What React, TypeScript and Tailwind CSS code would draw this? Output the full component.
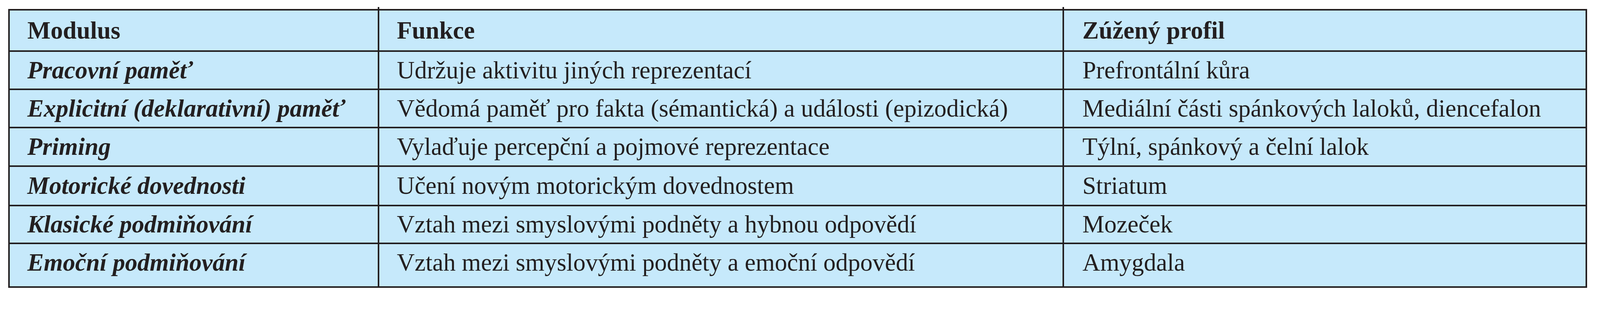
import React from "react"

type Row = {
  modul: string
  funkce: string
  profil: string
  h: string
}

const rows: Row[] = [
  { modul: "Pracovní paměť", funkce: "Udržuje aktivitu jiných reprezentací", profil: "Prefrontální kůra", h: "h-[98px]" },
  {
    modul: "Explicitní (deklarativní) paměť",
    funkce: "Vědomá paměť pro fakta (sémantická) a události (epizodická)",
    profil: "Mediální části spánkových laloků, diencefalon",
    h: "h-[98px]",
  },
  { modul: "Priming", funkce: "Vylaďuje percepční a pojmové reprezentace", profil: "Týlní, spánkový a čelní lalok", h: "h-[99px]" },
  { modul: "Motorické dovednosti", funkce: "Učení novým motorickým dovednostem", profil: "Striatum", h: "h-[101px]" },
  { modul: "Klasické podmiňování", funkce: "Vztah mezi smyslovými podněty a hybnou odpovědí", profil: "Mozeček", h: "h-[97px]" },
]

const last: Row = {
  modul: "Emoční podmiňování",
  funkce: "Vztah mezi smyslovými podněty a emoční odpovědí",
  profil: "Amygdala",
  h: "h-[112px]",
}

// snímek má jen 4096 px na šířku, proto je tabulka vodorovně zúžená
export default function App() {
  return (
    <div className="w-full h-[800px] bg-white pt-[23px] pl-[21px] font-['Liberation_Serif','Times_New_Roman',serif] text-[63px] leading-none text-[#231f20]">
      <div className="w-[4042px] border-4 border-[#231f20] bg-[#c6e9fb]">
        {/* hlavička */}
        <div className="grid grid-cols-[942px_1753px_1339px] h-[102px] font-bold">
          <div className="flex items-center pl-[45px] whitespace-nowrap">Modulus</div>
          <div className="relative flex items-center pl-[45px] border-l-4 border-[#231f20] whitespace-nowrap">
            <span className="absolute left-[-4px] top-[-9px] w-[4px] h-[5px] bg-[#231f20]" />
            Funkce
          </div>
          <div className="relative flex items-center pl-[47px] border-l-4 border-[#231f20] whitespace-nowrap">
            <span className="absolute left-[-4px] top-[-9px] w-[4px] h-[5px] bg-[#231f20]" />
            Zúžený profil
          </div>
        </div>

        {rows.map((r) => (
          <div key={r.modul} className={"grid grid-cols-[942px_1753px_1339px] border-t-4 border-[#231f20] " + r.h}>
            <div className="flex items-center pl-[45px] font-bold italic whitespace-nowrap">{r.modul}</div>
            <div className="flex items-center pl-[45px] border-l-4 border-[#231f20] whitespace-nowrap">{r.funkce}</div>
            <div className="flex items-center pl-[47px] border-l-4 border-[#231f20] whitespace-nowrap">{r.profil}</div>
          </div>
        ))}

        <div className={"grid grid-cols-[942px_1753px_1339px] border-t-4 border-[#231f20] " + last.h}>
          <div className="pt-[16px] pl-[45px] font-bold italic whitespace-nowrap">{last.modul}</div>
          <div className="pt-[16px] pl-[45px] border-l-4 border-[#231f20] whitespace-nowrap">{last.funkce}</div>
          <div className="pt-[16px] pl-[47px] border-l-4 border-[#231f20] whitespace-nowrap">{last.profil}</div>
        </div>
      </div>
    </div>
  )
}
